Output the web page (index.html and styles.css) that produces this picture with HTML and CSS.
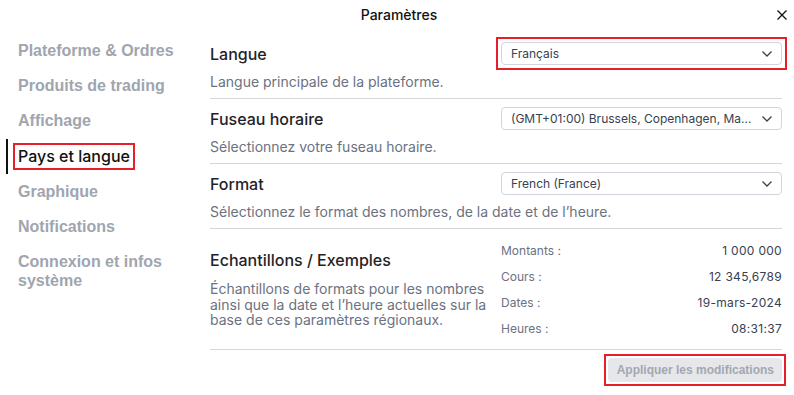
FILE: index.html
```html
<!DOCTYPE html>
<html lang="fr">
<head>
<meta charset="utf-8">
<title>Paramètres</title>
<link rel="stylesheet" href="styles.css">
</head>
<body>
<div class="dialog">
  <header class="head">
    <span></span>
    <h1 class="title">Paramètres</h1>
    <button class="close" aria-label="Fermer">
      <svg width="10" height="10" viewBox="0 0 10 10"><path d="M0.5 0.5 L9.5 9.5 M9.5 0.5 L0.5 9.5" stroke="#111" stroke-width="1.3" fill="none"/></svg>
    </button>
  </header>
  <div class="main">
    <nav class="nav">
      <div class="nav-item">Plateforme &amp; Ordres</div>
      <div class="nav-item">Produits de trading</div>
      <div class="nav-item">Affichage</div>
      <div class="nav-item active"><span class="mark">Pays et langue</span></div>
      <div class="nav-item">Graphique</div>
      <div class="nav-item">Notifications</div>
      <div class="nav-item">Connexion et infos<br>système</div>
    </nav>
    <section class="content">
      <div class="row">
        <div class="row-head">
          <h2 class="label">Langue</h2>
          <div class="hl-box">
            <div class="select">
              <span class="select-text">Français</span>
              <svg class="chev" width="10" height="6" viewBox="0 0 10 6"><path d="M0.5 0.5 L5 5 L9.5 0.5" stroke="#374151" stroke-width="1.3" fill="none"/></svg>
            </div>
          </div>
        </div>
        <p class="desc">Langue principale de la plateforme.</p>
      </div>
      <div class="row">
        <div class="row-head">
          <h2 class="label">Fuseau horaire</h2>
          <div class="select">
            <span class="select-text">(GMT+01:00) Brussels, Copenhagen, Ma...</span>
            <svg class="chev" width="10" height="6" viewBox="0 0 10 6"><path d="M0.5 0.5 L5 5 L9.5 0.5" stroke="#374151" stroke-width="1.3" fill="none"/></svg>
          </div>
        </div>
        <p class="desc">Sélectionnez votre fuseau horaire.</p>
      </div>
      <div class="row">
        <div class="row-head">
          <h2 class="label">Format</h2>
          <div class="select">
            <span class="select-text">French (France)</span>
            <svg class="chev" width="10" height="6" viewBox="0 0 10 6"><path d="M0.5 0.5 L5 5 L9.5 0.5" stroke="#374151" stroke-width="1.3" fill="none"/></svg>
          </div>
        </div>
        <p class="desc">Sélectionnez le format des nombres, de la date et de l’heure.</p>
      </div>
      <div class="samples">
        <div class="samples-left">
          <h2 class="label">Echantillons / Exemples</h2>
          <p class="desc multi">Échantillons de formats pour les nombres ainsi que la date et l’heure actuelles sur la base de ces paramètres régionaux.</p>
        </div>
        <div class="samples-grid">
          <span class="s-label">Montants :</span><span class="s-value">1 000 000</span>
          <span class="s-label">Cours :</span><span class="s-value">12 345,6789</span>
          <span class="s-label">Dates :</span><span class="s-value">19-mars-2024</span>
          <span class="s-label">Heures :</span><span class="s-value">08:31:37</span>
        </div>
      </div>
      <div class="actions">
        <div class="hl-btn">
          <button class="apply">Appliquer les modifications</button>
        </div>
      </div>
    </section>
  </div>
</div>
</body>
</html>
```
FILE: styles.css
```css
* { box-sizing: border-box; }
html, body { margin: 0; padding: 0; background: #fff; }
body {
  font-family: Inter, "Noto Sans", sans-serif;
  color: #1f2328;
  width: 794px;
  height: 395px;
  overflow: hidden;
}
.dialog { width: 794px; height: 395px; }
.head {
  height: 34px;
  display: grid;
  grid-template-columns: 1fr auto 1fr;
  align-items: center;
  padding: 0 0 4px 0;
}
.title {
  margin: 0 0 0 4px;
  font-size: 14px;
  font-weight: 500;
  color: #111;
  line-height: 20px;
}
.close {
  justify-self: end;
  margin-right: 7px;
  border: 0;
  background: none;
  padding: 0;
  width: 10px;
  height: 10px;
  display: flex;
}
.main { display: flex; }
.nav {
  width: 210px;
  flex: 0 0 210px;
  padding: 0 0 0 6px;
  margin-top: -1px;
}
.nav-item {
  font-family: "Liberation Sans", Arial, sans-serif;
  font-weight: 700;
  font-size: 16px;
  line-height: 19px;
  color: #a0a5ae;
  padding: 8.1px 0 8.1px 10px;
  border-left: 2px solid transparent;
}
.nav-item.active {
  border-left-color: #111;
  font-family: Inter, sans-serif;
  font-weight: 500;
  color: #111;
}
.mark {
  outline: 2px solid #e5202b;
  padding: 1px 3px 2px;
  margin-left: -3px;
}
.content {
  flex: 1;
  padding-right: 12px;
}
.row {
  padding: 8px 0 6px;
  border-bottom: 1px solid #d4d6db;
}
.row-head {
  display: grid;
  grid-template-columns: minmax(0, 1fr) minmax(0, 1fr);
  column-gap: 10px;
  align-items: center;
}
.label {
  margin: 0;
  font-size: 16px;
  font-weight: 500;
  line-height: 20px;
  color: #1f2328;
}
.hl-box {
  margin: -5px;
  padding: 3px;
  border: 2px solid #e5202b;
}
.select {
  height: 23px;
  border: 1px solid #d1d5db;
  border-radius: 4px;
  display: flex;
  align-items: center;
  justify-content: space-between;
  padding: 0 9px 0 9px;
  font-size: 12px;
  color: #374151;
  min-width: 0;
}
.select-text { white-space: nowrap; overflow: hidden; }
.chev { flex: 0 0 auto; margin-left: 8px; }
.desc {
  margin: 7px 0 0;
  font-size: 14px;
  line-height: 20px;
  color: #6b7280;
}
.desc.multi {
  margin-top: 11px;
  line-height: 15.5px;
}
.samples {
  display: grid;
  grid-template-columns: minmax(0, 1fr) minmax(0, 1fr);
  column-gap: 10px;
  align-items: center;
  padding: 8px 0 8px;
  border-bottom: 1px solid #d4d6db;
}
.samples-grid {
  display: grid;
  grid-template-columns: 1fr auto;
  grid-auto-rows: 26px;
  align-items: center;
  font-size: 12px;
}
.s-label { color: #6b7280; }
.s-value { color: #374151; text-align: right; letter-spacing: 0.3px; }
.actions {
  display: flex;
  justify-content: flex-end;
  padding-top: 8px;
}
.hl-btn {
  margin: -4px;
  padding: 2px;
  border: 2px solid #e5202b;
  display: flex;
}
.apply {
  font-family: "Liberation Sans", Arial, sans-serif;
  font-weight: 700;
  font-size: 12px;
  color: #a3a7af;
  background: #e5e7eb;
  border: 0;
  border-radius: 4px;
  height: 24px;
  padding: 0 8px 0 9px;
}
```
